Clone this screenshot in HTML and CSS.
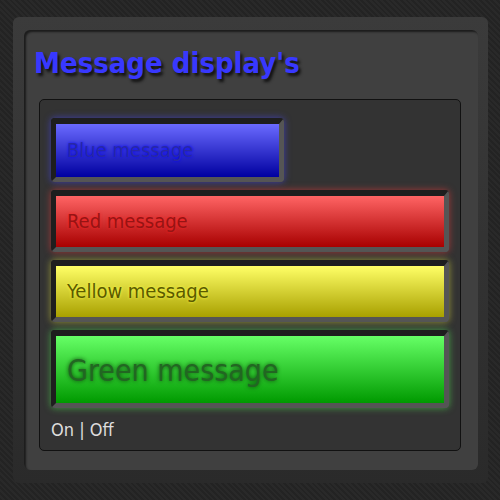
FILE: index.html
```html
<!DOCTYPE html>
<html lang="en">
  <head>
    <meta charset="UTF-8" />
    <meta name="viewport" content="width=device-width, initial-scale=1.0" />
    <title>Message display's</title>
    <link rel="stylesheet" href="styles.css">
  </head>
  <body>
    <div class="wrap">
      <div class="panel">
        <h1>Message display's</h1>
        <div class="box">
          <div class="msg msg-blue">Blue message</div>
          <div class="msg msg-red">Red message</div>
          <div class="msg msg-yellow">Yellow message</div>
          <div class="msg msg-green">Green message</div>
          <p class="toggle">On | Off</p>
        </div>
      </div>
    </div>
  </body>
</html>
```

FILE: styles.css
```css
      body {
        font-family: "DejaVu Sans Condensed", "Liberation Sans", sans-serif;
        margin: 0;
        padding: 0;
        background-color: #252525;
        background-image: repeating-linear-gradient(45deg, #232323 0 2px, #292929 2px 4px);
      }

      .wrap {
        width: 454px;
        margin: 17px 12px 17px 13px;
        padding: 13px 10px 13px 11px;
        border-radius: 6px;
        background: linear-gradient(#3b3b3b, #2a2a2a);
      }

      .panel {
        padding: 15px 17px 19px 15px;
        border-radius: 6px;
        background-color: #404040;
        box-shadow: inset 2px 2px 2px #1c1c1c;
      }

      .panel h1 {
        margin: 0 0 18px -5px;
        font-size: 29px;
        line-height: 36px;
        font-weight: bold;
        color: #3838ff;
        text-shadow: 2px 3px 3px #111;
      }

      .box {
        padding: 18px 11px 9px 11px;
        background-color: #333;
        border: 1px solid #111;
        border-radius: 5px;
      }

      .msg {
        margin-bottom: 8px;
        padding: 13px 11px 14px 11px;
        font-size: 20px;
        line-height: 24px;
        border-style: solid;
        border-width: 6px 5px 5px 5px;
        border-color: #1e1e1e #555 #555 #1e1e1e;
        border-radius: 4px;
      }

      .msg-blue {
        width: 201px;
        padding: 14px 11px 15px 11px;
        color: #2828a6;
        text-shadow: 0 0 3px #0000ff;
        background: linear-gradient(#6a6aff, #0000a0);
        box-shadow: 0 0 7px rgba(70, 70, 255, 0.6);
      }

      .msg-red {
        color: #961414;
        text-shadow: 0 0 3px #ff2020;
        background: linear-gradient(#ff6464, #a80000);
        box-shadow: 0 0 7px rgba(255, 60, 60, 0.55);
      }

      .msg-yellow {
        color: #5a5a00;
        text-shadow: 0 0 3px #ffff40;
        background: linear-gradient(#ffff66, #a8a000);
        box-shadow: 0 0 7px rgba(230, 230, 60, 0.55);
      }

      .msg-green {
        padding: 17px 11px 14px 11px;
        font-size: 30px;
        line-height: 36px;
        color: #226622;
        text-shadow: 0 0 4px #0b4a0b;
        background: linear-gradient(#66ff66, #009a00);
        box-shadow: 0 0 7px rgba(80, 230, 80, 0.6);
      }

      .toggle {
        margin: 11px 0 0 0;
        font-size: 18px;
        line-height: 22px;
        color: #ddd;
      }
```
